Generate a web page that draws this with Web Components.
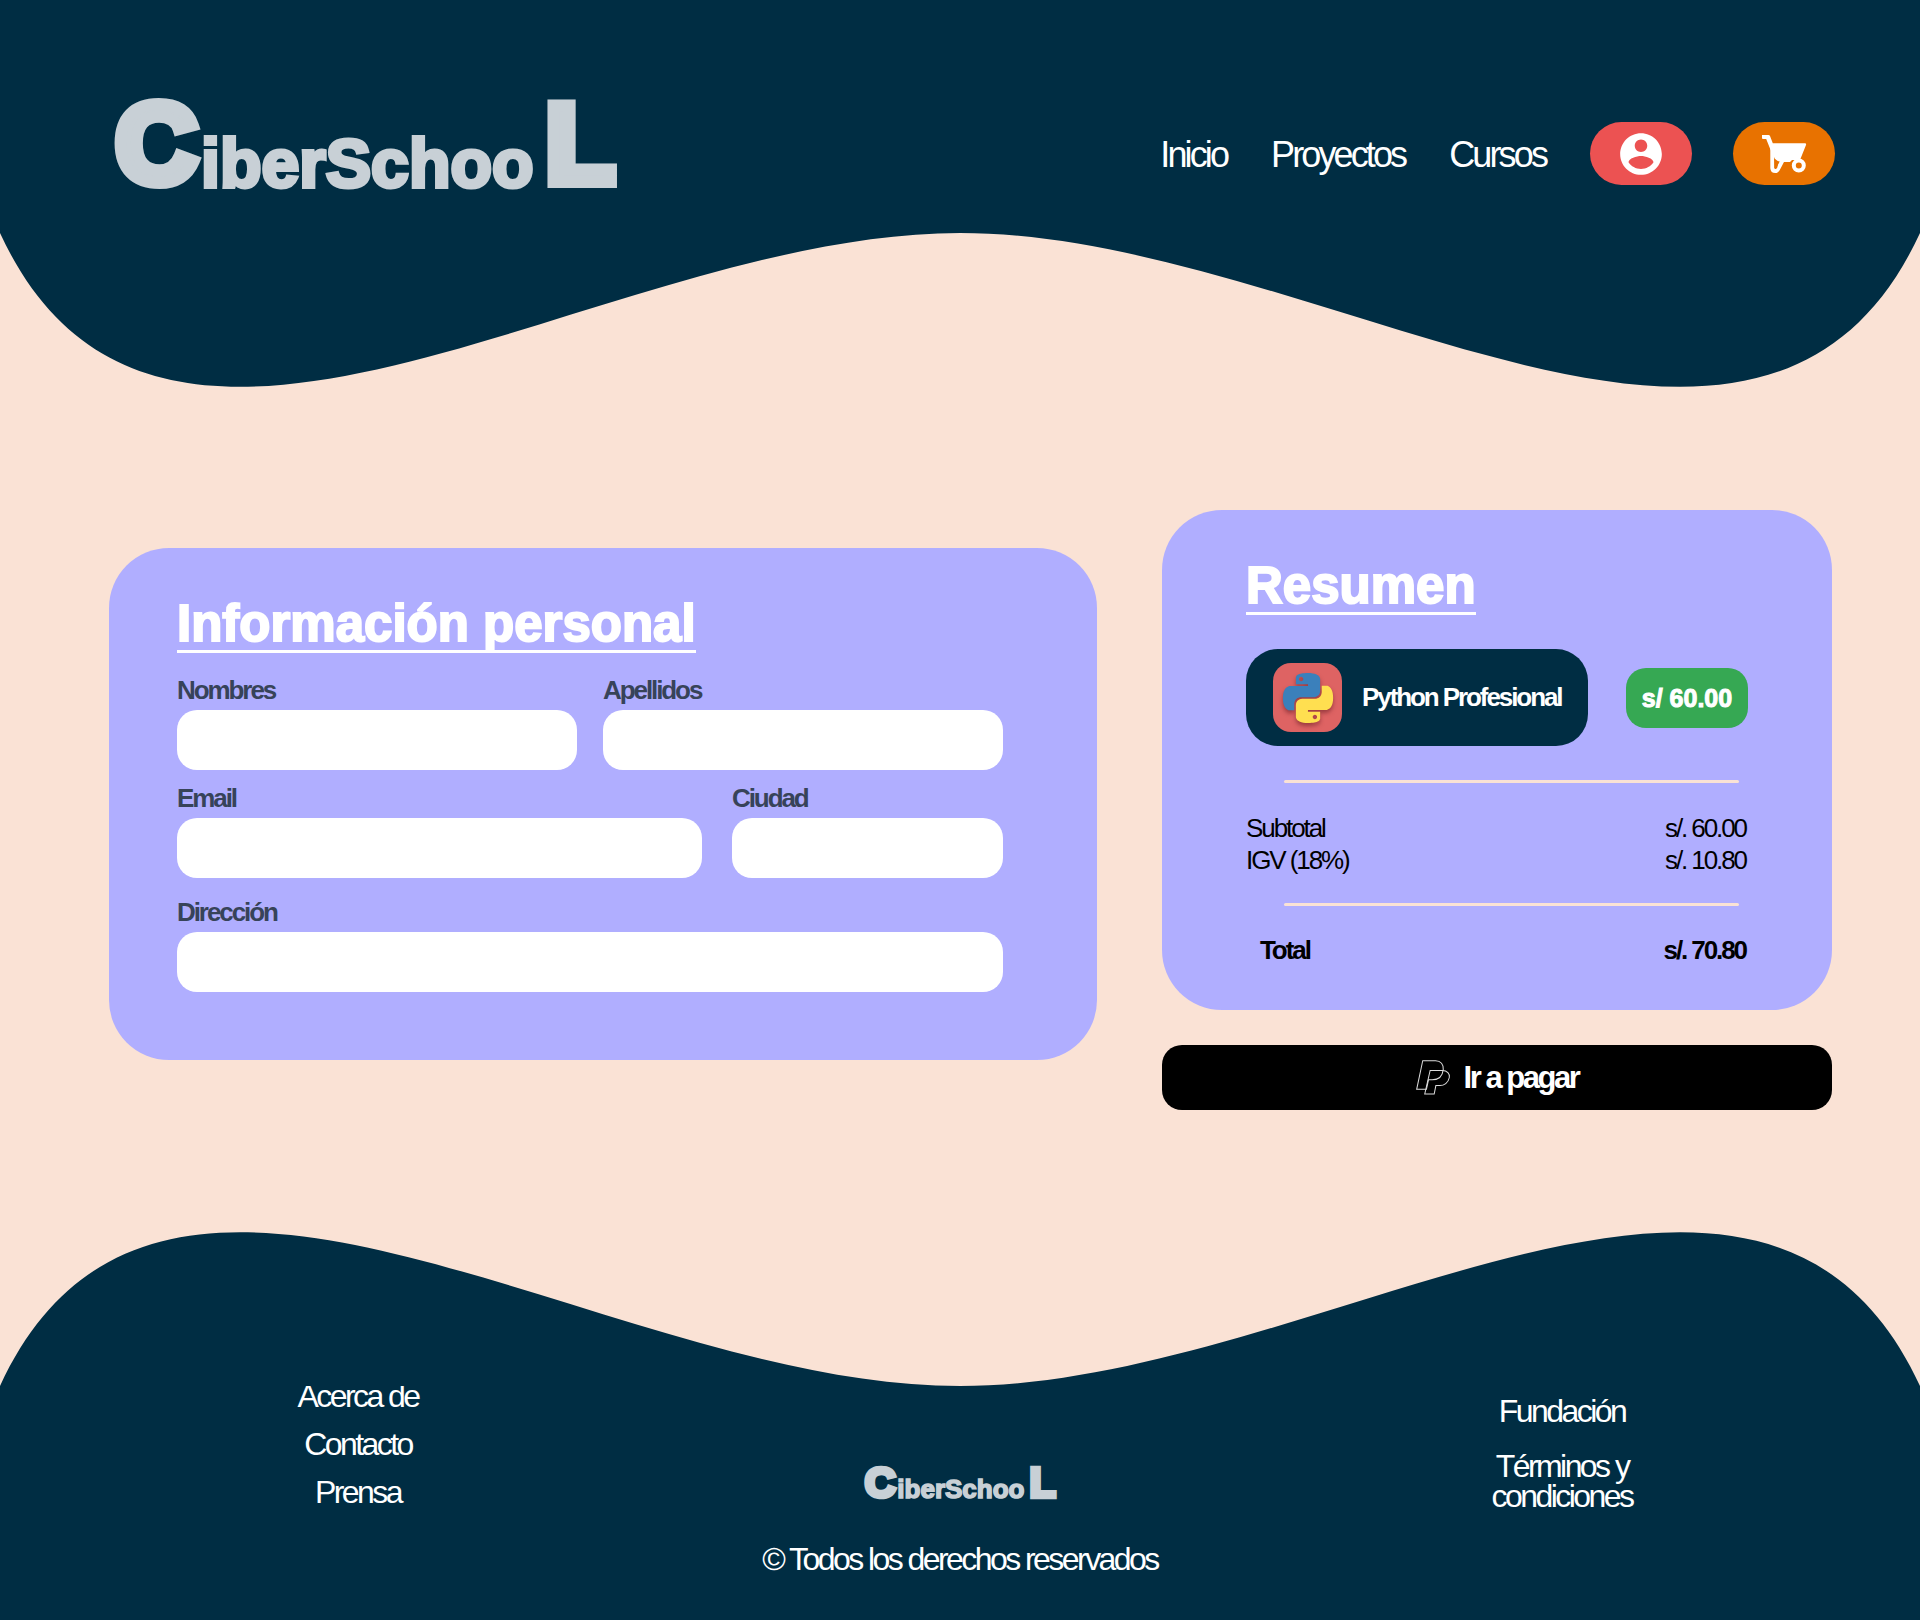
<!DOCTYPE html>
<html lang="es">
<head>
<meta charset="utf-8">
<meta name="viewport" content="width=device-width, initial-scale=1">
<title>CiberSchool</title>
<style>
:root{
  --navy:#002d43; --peach:#fae2d5; --lilac:#b0aeff; --tracking:-0.08em;
}
body{margin:0;background:var(--peach);font-family:"Liberation Sans",Arial,sans-serif}
</style>
</head>
<body>
<cs-page>
  <cs-header slot="header">
    <a href="#inicio">Inicio</a>
    <a href="#proyectos">Proyectos</a>
    <a href="#cursos">Cursos</a>
  </cs-header>
  <cs-card slot="form" heading="Información personal" class="form">
    <cs-personal-form></cs-personal-form>
  </cs-card>
  <cs-summary slot="summary"></cs-summary>
  <cs-footer slot="footer"></cs-footer>
</cs-page>

<script>
class Base extends HTMLElement{
  constructor(){
    super();
    this.attachShadow({mode:'open'}).innerHTML=
      `<style>*{box-sizing:border-box}:host{display:block}${this.css()}</style>${this.html()}`;
  }
  css(){return ''}
  html(){return ''}
}

customElements.define('cs-page',class extends Base{
  css(){return `
    main{display:grid;grid-template-columns:988fr 670fr;gap:65px;align-items:start;padding:123px 88px 122px 109px}
    .form{padding-top:38px}`}
  html(){return `<slot name="header"></slot>
    <main><div class="form"><slot name="form"></slot></div><slot name="summary"></slot></main>
    <slot name="footer"></slot>`}
});

customElements.define('cs-wave',class extends Base{
  css(){return `
    svg{display:block;width:100%;height:154px;fill:var(--navy)}
    :host([flip]) svg{transform:scaleY(-1)}`}
  html(){return `<svg viewBox="0 0 1920 154" preserveAspectRatio="none" aria-hidden="true">
    <path d="M0 0C160 346 600 0 960 0S1760 346 1920 0Z"/></svg>`}
});

customElements.define('cs-logo',class extends Base{
  css(){return `
    svg{display:block;width:100%;overflow:visible}
    text{font-family:"Liberation Sans",Arial,sans-serif;font-weight:700;fill:#c8d0d6;stroke:#c8d0d6;stroke-linejoin:miter}
    .big{font-size:112px;stroke-width:12px}
    .small{font-size:68px;stroke-width:4px}`}
  html(){return `<svg viewBox="0 0 504 93" role="img" aria-label="CiberSchool">
    <text class="big" x="2" y="85">C</text><text class="small" x="87" y="90">iberSchoo</text><text class="big" x="432" y="85">L</text></svg>`}
});

customElements.define('cs-header',class extends Base{
  css(){return `
    .bar{background:var(--navy);height:233px;padding:74px 85px 0 114px;display:flex;justify-content:space-between;align-items:flex-start}
    cs-logo{width:504px;padding-top:23px}
    nav{display:flex;align-items:center;gap:44px;height:159px}
    .actions{display:flex;gap:41px}
    ::slotted(a){color:#fff;text-decoration:none;font-size:36px;line-height:40px;padding-top:3px;letter-spacing:var(--tracking)}
    button{border:0;padding:0;width:102px;height:63px;border-radius:32px;display:flex;align-items:center;justify-content:center;cursor:pointer}
    .user{background:#ec5252}.cart{background:#e87200}
    svg{display:block;fill:#fff}`}
  html(){return `<header><div class="bar"><cs-logo></cs-logo><nav><slot></slot><div class="actions">
    <button class="user" type="button" aria-label="Cuenta"><svg width="50" height="50" viewBox="0 0 24 24"><path d="M12 2C6.48 2 2 6.48 2 12s4.48 10 10 10 10-4.48 10-10S17.52 2 12 2zm0 3c1.66 0 3 1.34 3 3s-1.34 3-3 3-3-1.34-3-3 1.34-3 3-3zm0 14.2c-2.5 0-4.71-1.28-6-3.22.03-1.99 4-3.08 6-3.08 1.99 0 5.97 1.09 6 3.08-1.29 1.94-3.5 3.22-6 3.22z"/></svg></button>
    <button class="cart" type="button" aria-label="Carrito"><svg width="45" height="38" viewBox="0 0 45 38">
      <path d="M0 0H6.500Q7.500 0 8 1L10.800 8.300H43Q44.500 8.300 44 10L38 25H30L28 27H21L14 26 8.200 14 4.200 4H1Q0 4 0 3Z"/>
      <path d="M10.300 13V33Q10.500 36 13.300 36Q15 36 16 34L21 24.500" fill="none" stroke="#fff" stroke-width="4"/>
      <path d="M12.200 23.500 16.500 26.500 15.300 32.500Q14 35 12.500 33Z" fill="#e87200"/>
      <circle cx="36.800" cy="30.500" r="5" fill="#e87200" stroke="#fff" stroke-width="4"/></svg></button>
    </div></nav></div><cs-wave></cs-wave></header>`}
});

customElements.define('cs-card',class extends Base{
  css(){return `
    section{background:var(--lilac);border-radius:60px;padding:50px 84px 44px 84px}
    :host(.form) section{padding:50px 94px 68px 68px}
    h2{margin:0;width:fit-content;color:#fff;font-size:51px;line-height:52px;font-weight:700;-webkit-text-stroke:2px #fff;border-bottom:3px solid #fff}`}
  html(){return `<section><h2></h2><slot></slot></section>`}
  connectedCallback(){this.shadowRoot.querySelector('h2').textContent=this.getAttribute('heading')}
});

customElements.define('cs-field',class extends Base{
  css(){return `
    :host{flex:1 1 0;min-width:0}
    label{display:block;color:#374359;font-size:26px;font-weight:700;line-height:30px;letter-spacing:var(--tracking);margin-bottom:5px}
    input{display:block;width:100%;height:60px;border:0;border-radius:20px;background:#fff;padding:0 20px;font:24px "Liberation Sans",Arial,sans-serif;outline-offset:2px}`}
  html(){return `<label for="f"></label><input id="f">`}
  connectedCallback(){
    this.shadowRoot.querySelector('label').textContent=this.getAttribute('label');
    this.shadowRoot.querySelector('input').type=this.getAttribute('type')||'text';
  }
});

customElements.define('cs-personal-form',class extends Base{
  css(){return `
    form{padding-top:22px}
    .row{display:flex;gap:26px}
    .row+.row{gap:30px;margin-top:13px}
    .row.last{margin-top:19px}
    .wide{flex-grow:525}.narrow{flex-grow:271}`}
  html(){return `<form>
    <div class="row"><cs-field label="Nombres"></cs-field><cs-field label="Apellidos"></cs-field></div>
    <div class="row"><cs-field class="wide" label="Email" type="email"></cs-field><cs-field class="narrow" label="Ciudad"></cs-field></div>
    <div class="row last"><cs-field label="Dirección"></cs-field></div></form>`}
});

customElements.define('cs-course',class extends Base{
  css(){return `
    :host{display:flex;justify-content:space-between;align-items:center;margin-top:34px}
    .course{display:flex;align-items:center;gap:20px;background:var(--navy);border-radius:32px;padding:14px 27px;color:#fff;font-size:26px;font-weight:700}
    .course span{letter-spacing:var(--tracking);white-space:nowrap}
    .tile{width:69px;height:69px;border-radius:18px;background:#de6363;display:flex;align-items:center;justify-content:center}
    svg{display:block;overflow:visible;filter:drop-shadow(0 3px 2px rgba(90,20,30,.5))}
    .price{background:#36a853;color:#fff;border-radius:20px;width:122px;height:60px;font-size:25px;line-height:60px;text-align:center;font-weight:700;-webkit-text-stroke:1px #fff}`}
  html(){
    const half='M14.25.18l.9.2.73.26.59.3.45.32.34.34.25.34.16.33.1.3.04.26.02.2-.01.13V8.500l-.05.63-.13.55-.21.46-.26.38-.3.31-.33.25-.35.19-.35.14-.33.1-.3.07-.26.04-.21.02H8.770l-.69.05-.59.14-.5.22-.41.27-.33.32-.27.35-.2.36-.15.37-.1.35-.07.32-.04.27-.02.21v3.060H3.170l-.21-.03-.28-.07-.32-.12-.35-.18-.36-.26-.36-.36-.35-.46-.32-.59-.28-.73-.21-.88-.14-1.050-.05-1.230.06-1.220.16-1.040.24-.87.32-.71.36-.57.4-.44.42-.33.42-.24.4-.16.36-.1.32-.05.24-.01h.16l.06.01h8.160v-.83H6.180l-.01-2.750-.02-.37.05-.34.11-.31.17-.28.25-.26.31-.23.38-.2.44-.18.51-.15.58-.12.64-.1.71-.06.77-.04.84-.02 1.270.05zm-6.300 1.980l-.23.33-.08.41.08.41.23.34.33.22.41.09.41-.09.33-.22.23-.34.08-.41-.08-.41-.23-.33-.33-.22-.41-.09-.41.09z';
    return `<div class="course"><div class="tile"><svg width="50" height="50" viewBox="0 0 24 24" aria-hidden="true">
      <path fill="#3b80bb" d="${half}"/><path fill="#ffdf50" transform="rotate(180 12 12)" d="${half}"/></svg></div>
      <span>Python Profesional</span></div><div class="price">s/ 60.00</div>`}
});

customElements.define('cs-totals',class extends Base{
  css(){return `
    hr{border:0;height:3px;border-radius:2px;background:var(--peach);margin:27px 9px 28px 38px}
    hr.first{margin-top:34px;margin-bottom:29px}
    dl{margin:0;padding-right:2px}
    dl div{display:flex;justify-content:space-between;font-size:26px;line-height:32px;letter-spacing:var(--tracking)}
    dd{margin:0}
    .total{font-weight:700;padding-left:14px}`}
  html(){return `<hr class="first"><dl>
    <div><dt>Subtotal</dt><dd>s/. 60.00</dd></div>
    <div><dt>IGV (18%)</dt><dd>s/. 10.80</dd></div></dl><hr>
    <dl><div class="total"><dt>Total</dt><dd>s/. 70.80</dd></div></dl>`}
});

customElements.define('cs-summary',class extends Base{
  css(){return `
    button{display:flex;align-items:center;justify-content:center;gap:14px;width:100%;height:65px;margin-top:35px;border:0;border-radius:20px;background:#000;color:#fff;font:700 31px/40px "Liberation Sans",Arial,sans-serif;letter-spacing:var(--tracking);cursor:pointer}
    svg{display:block;overflow:visible}`}
  html(){return `<cs-card heading="Resumen"><cs-course></cs-course><cs-totals></cs-totals></cs-card>
    <button type="button"><svg width="34" height="35" viewBox="50 60 101 104" fill="none" stroke="#ddd" stroke-width="3" aria-hidden="true">
      <path d="M70 62H108C124 62 132 74 131 88C129 108 116 119 98 119H87L81 147H52Z"/>
      <path d="M92 91H128C143 91 151 101 149 112C146 128 133 136 121 136H109L104 161H76Z"/></svg>
      <span>Ir a pagar</span></button>`}
});

customElements.define('cs-footer',class extends Base{
  css(){return `
    .body{background:var(--navy);display:flow-root}
    .cols{display:grid;grid-template-columns:1fr 1fr 1fr;margin-top:-14px;padding:0 57px 37px;color:#fff;font-size:32px;line-height:48px;text-align:center}
    ul{list-style:none;margin:0;padding:0}
    a,p{color:#fff;text-decoration:none;letter-spacing:var(--tracking)}
    .mid{display:flex;flex-direction:column;align-items:center;padding-top:92px}
    cs-logo{width:193px}
    p{margin:35px 0 0}
    .right{display:flex;flex-direction:column;align-items:center;gap:25px;padding-top:24px;line-height:30px}
    .right li{max-width:160px}`}
  html(){return `<footer><cs-wave flip></cs-wave><div class="body"><div class="cols">
    <ul><li><a href="#acerca">Acerca de</a></li><li><a href="#contacto">Contacto</a></li><li><a href="#prensa">Prensa</a></li></ul>
    <div class="mid"><cs-logo></cs-logo><p>© Todos los derechos reservados</p></div>
    <ul class="right"><li><a href="#fundacion">Fundación</a></li><li><a href="#terminos">Términos y condiciones</a></li></ul>
    </div></div></footer>`}
});
</script>
</body>
</html>
